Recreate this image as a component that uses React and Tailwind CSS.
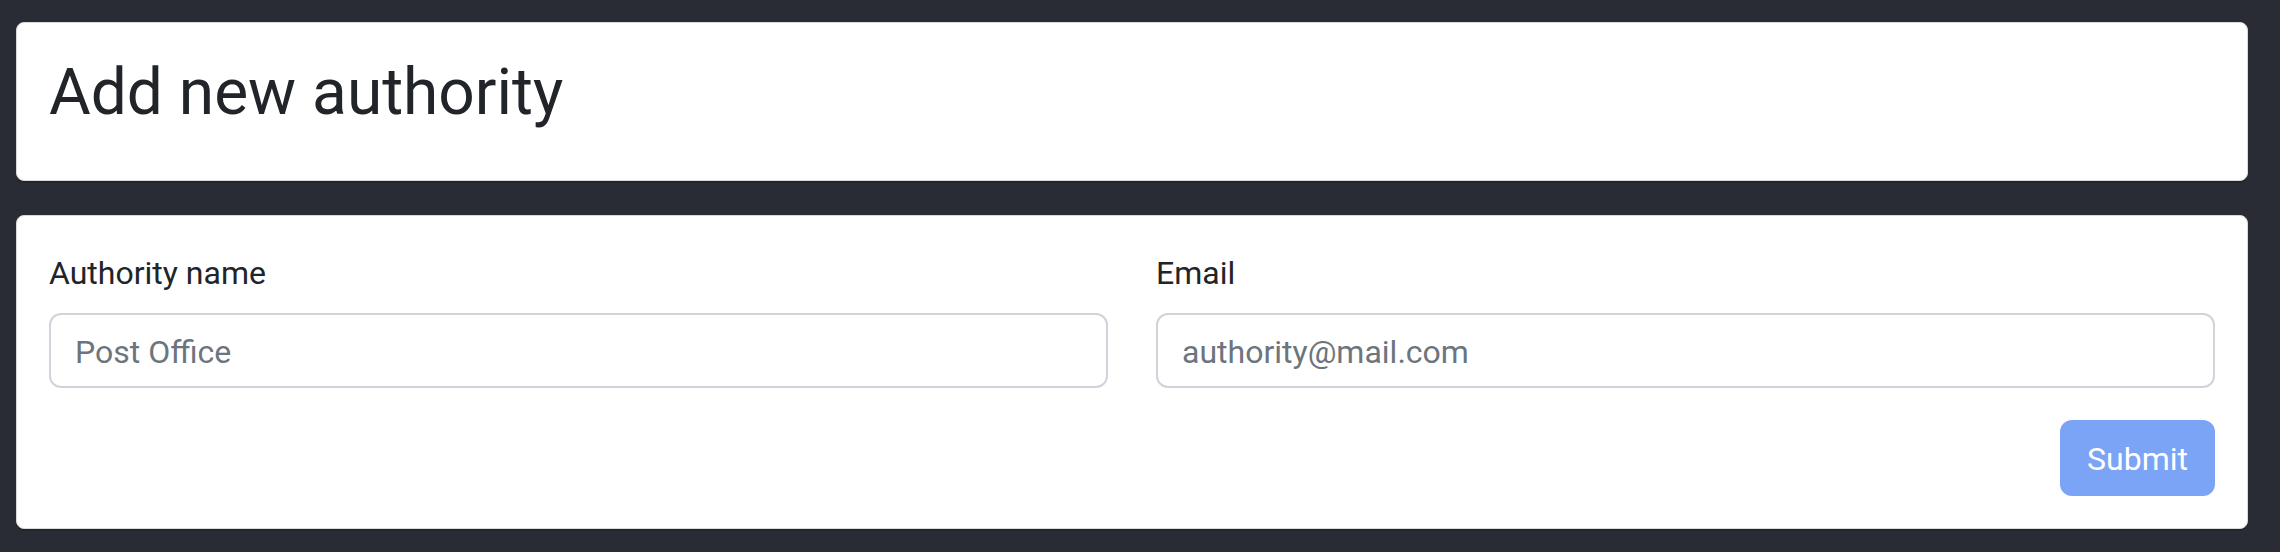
import React from "react";

export default function App() {
  return (
    <div className="min-h-screen bg-[#292c34] pt-[22px] pl-4 pr-8 pb-6 font-['Roboto',sans-serif] text-[#212529]">
      <div className="bg-white border border-[#d9d9d9] rounded-lg px-8 pt-8 pb-12 shadow-[0_2px_0_rgba(0,0,0,0.15)]">
        <h1 className="text-[64px] leading-[1.2] font-normal">Add new authority</h1>
      </div>
      <div className="mt-[34px] bg-white border border-[#d9d9d9] rounded-lg px-8 pt-[33px] pb-8 shadow-[0_2px_0_rgba(0,0,0,0.15)]">
        <div className="grid grid-cols-2 gap-x-12">
          <div>
            <label className="block text-[32px] leading-[48px] mb-4">Authority name</label>
            <input
              type="text"
              placeholder="Post Office"
              className="block w-full h-[75px] border-2 border-[#ced4da] rounded-xl px-6 pt-[4px] text-[32px] bg-white outline-none placeholder:text-[#6c757d]"
            />
          </div>
          <div>
            <label className="block text-[32px] leading-[48px] mb-4">Email</label>
            <input
              type="text"
              placeholder="authority@mail.com"
              className="block w-full h-[75px] border-2 border-[#ced4da] rounded-xl px-6 pt-[4px] text-[32px] bg-white outline-none placeholder:text-[#6c757d]"
            />
          </div>
        </div>
        <div className="flex justify-end mt-8">
          <button className="h-[76px] px-[27px] pt-[3px] rounded-xl bg-[#7ba3f6] text-white text-[32px] leading-none">
            Submit
          </button>
        </div>
      </div>
    </div>
  );
}
